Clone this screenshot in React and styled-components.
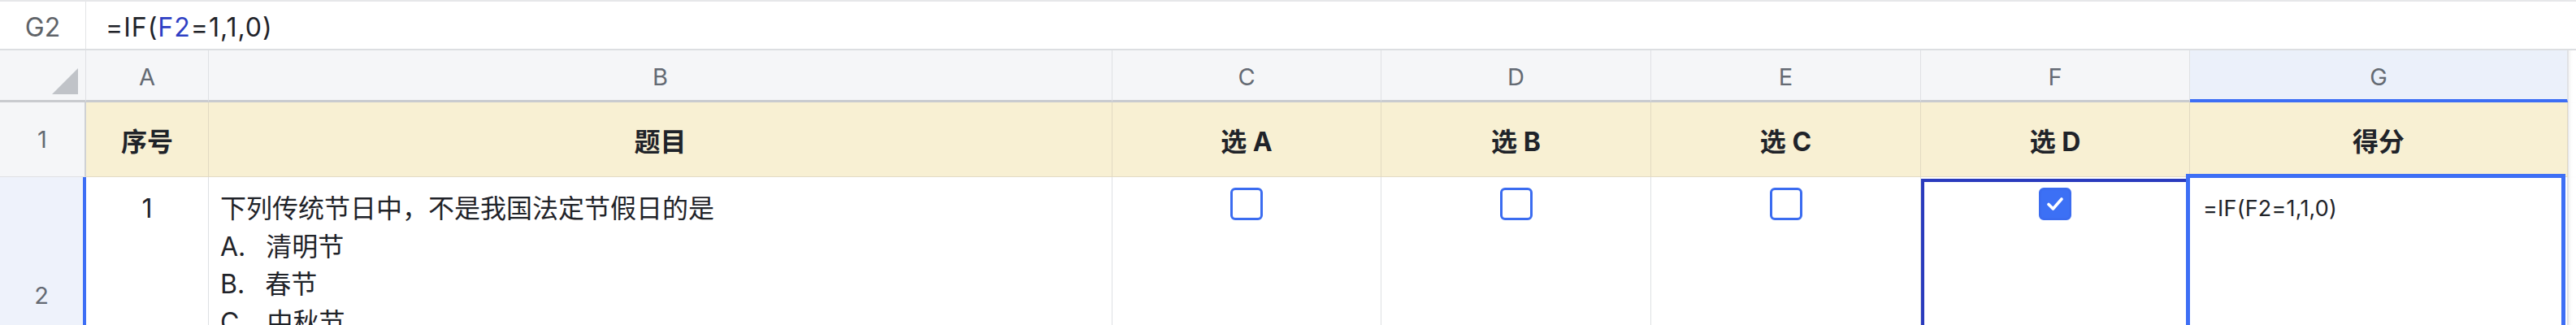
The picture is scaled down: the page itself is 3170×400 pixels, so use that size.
import React from "react";
import styled, { createGlobalStyle } from "styled-components";

const GlobalStyle = createGlobalStyle`
  html, body {
    margin: 0;
    padding: 0;
    background: #ffffff;
  }
  body {
    font-family: "Inter", "Noto Sans CJK SC", sans-serif;
    color: #1f2329;
  }
`;

const COLS = [106, 151, 1112, 331, 332, 332, 331, 465];

const Page = styled.div`
  width: 3170px;
  height: 400px;
  overflow: hidden;
  position: relative;
  background: #ffffff;
`;

const FormulaBar = styled.div`
  display: flex;
  align-items: stretch;
  height: 62px;
  box-sizing: border-box;
  border-top: 2px solid #e6e7e9;
  border-bottom: 2px solid #dcdee1;
`;

const NameBox = styled.div`
  width: 106px;
  flex: none;
  display: flex;
  align-items: center;
  justify-content: center;
  border-right: 1px solid #e3e4e6;
  font-size: 32px;
  color: #5f6368;
  padding-top: 4px;
  box-sizing: border-box;
`;

const FormulaText = styled.div`
  display: flex;
  align-items: center;
  padding-left: 24px;
  padding-top: 4px;
  font-size: 32px;
  letter-spacing: 1px;
  color: #1f2329;
`;

const Ref = styled.span`
  color: #2e3fc4;
`;

const Sheet = styled.div`
  display: grid;
  grid-template-columns: ${COLS.map((w) => `${w}px`).join(" ")} 1fr;
  grid-template-rows: 64px 92px 292px;
`;

const Corner = styled.div`
  background: #f5f6f8;
  border-right: 1px solid #dfe1e4;
  border-bottom: 3px solid #c9cbcf;
  display: flex;
  align-items: flex-end;
  justify-content: flex-end;
  padding: 0 9px 7px 0;
  box-sizing: border-box;
`;

const ColHeader = styled.div`
  display: flex;
  align-items: center;
  justify-content: center;
  font-size: 29px;
  color: #646a73;
  background: ${(p) => (p.$active ? "#ebf0fa" : "#f5f6f8")};
  border-right: 1px solid #dfe1e4;
  border-bottom: ${(p) => (p.$active ? "4px solid #3d6ef5" : "3px solid #c9cbcf")};
  box-sizing: border-box;
  padding-top: 4px;
`;

const Gutter = styled.div`
  border-left: 1px solid #e3e4e6;
  box-shadow: inset 4px 0 4px -3px rgba(0, 0, 0, 0.08);
`;

const RowHeader = styled.div`
  display: flex;
  align-items: center;
  justify-content: center;
  font-size: 29px;
  color: #646a73;
  background: ${(p) => (p.$active ? "#eef2fb" : "#f5f6f8")};
  border-right: ${(p) => (p.$active ? "4px solid #3d6ef5" : "2px solid #cfd1d4")};
  border-bottom: 1px solid #dfe1e4;
  box-sizing: border-box;
`;

const TitleCell = styled.div`
  display: flex;
  align-items: center;
  justify-content: center;
  background: #f8f0d3;
  border-right: 1px solid #e2dac2;
  border-bottom: 1px solid #e2dbc6;
  font-size: 32px;
  font-weight: 700;
  color: #1f2329;
  box-sizing: border-box;
`;

const Cell = styled.div`
  position: relative;
  display: flex;
  flex-direction: column;
  align-items: ${(p) => (p.$align === "center" ? "center" : "flex-start")};
  padding: ${(p) => (p.$box ? "13px 0 0" : "16px 14px 0")};
  border-right: 1px solid #dee0e3;
  border-bottom: 1px solid #dee0e3;
  box-sizing: border-box;
  font-size: 32px;
  line-height: 46.5px;
  color: #1f2329;
`;

const Line = styled.div`
  white-space: pre;
`;

const Formula = styled.div`
  font-size: 27px;
  letter-spacing: 0.2px;
  padding-left: 2px;
`;

const Box = styled.div`
  width: 40px;
  height: 40px;
  box-sizing: border-box;
  border-radius: 6px;
  border: 3px solid #3b6cf0;
  background: ${(p) => (p.$checked ? "#3c70f5" : "#ffffff")};
  display: flex;
  align-items: center;
  justify-content: center;
`;

const RefFrame = styled.div`
  position: absolute;
  top: 2px;
  left: 0;
  right: 0;
  bottom: -20px;
  border: 4px solid #2a3bbd;
  pointer-events: none;
`;

const ActiveFrame = styled.div`
  position: absolute;
  top: -4px;
  left: -5px;
  right: 2px;
  bottom: -20px;
  border: 5px solid #3e6ff5;
  pointer-events: none;
  z-index: 2;
`;

const CornerMark = () => (
  <svg width="32" height="32" viewBox="0 0 32 32">
    <polygon points="32,0 32,32 0,32" fill="#c0c3c8" />
  </svg>
);

const Checkbox = ({ checked }) => (
  <Box $checked={checked}>
    {checked && (
      <svg width="26" height="26" viewBox="0 0 26 26">
        <polyline
          points="5,13.5 10.5,19 21,7"
          fill="none"
          stroke="#ffffff"
          strokeWidth="3.6"
          strokeLinecap="round"
          strokeLinejoin="round"
        />
      </svg>
    )}
  </Box>
);

const titles = ["序号", "题目", "选 A", "选 B", "选 C", "选 D", "得分"];
const letters = ["A", "B", "C", "D", "E", "F", "G"];
const question = [
  "下列传统节日中，不是我国法定节假日的是",
  "A. \u2002清明节",
  "B. \u2002春节",
  "C. \u2002中秋节",
  "D. \u2002重阳节",
];
const answers = [false, false, false, true];

export default function App() {
  return (
    <Page>
      <GlobalStyle />
      <FormulaBar>
        <NameBox>G2</NameBox>
        <FormulaText>
          =IF(<Ref>F2</Ref>=1,1,0)
        </FormulaText>
      </FormulaBar>

      <Sheet>
        <Corner>
          <CornerMark />
        </Corner>
        {letters.map((l) => (
          <ColHeader key={l} $active={l === "G"}>
            {l}
          </ColHeader>
        ))}
        <Gutter />

        <RowHeader>1</RowHeader>
        {titles.map((t) => (
          <TitleCell key={t}>{t}</TitleCell>
        ))}
        <Gutter />

        <RowHeader $active>2</RowHeader>
        <Cell $align="center">
          <Line>1</Line>
        </Cell>
        <Cell>
          {question.map((q) => (
            <Line key={q}>{q}</Line>
          ))}
        </Cell>
        {answers.map((a, i) => (
          <Cell key={i} $align="center" $box>
            <Checkbox checked={a} />
            {a && <RefFrame />}
          </Cell>
        ))}
        <Cell>
          <Formula>=IF(F2=1,1,0)</Formula>
          <ActiveFrame />
        </Cell>
        <Gutter />
      </Sheet>
    </Page>
  );
}
